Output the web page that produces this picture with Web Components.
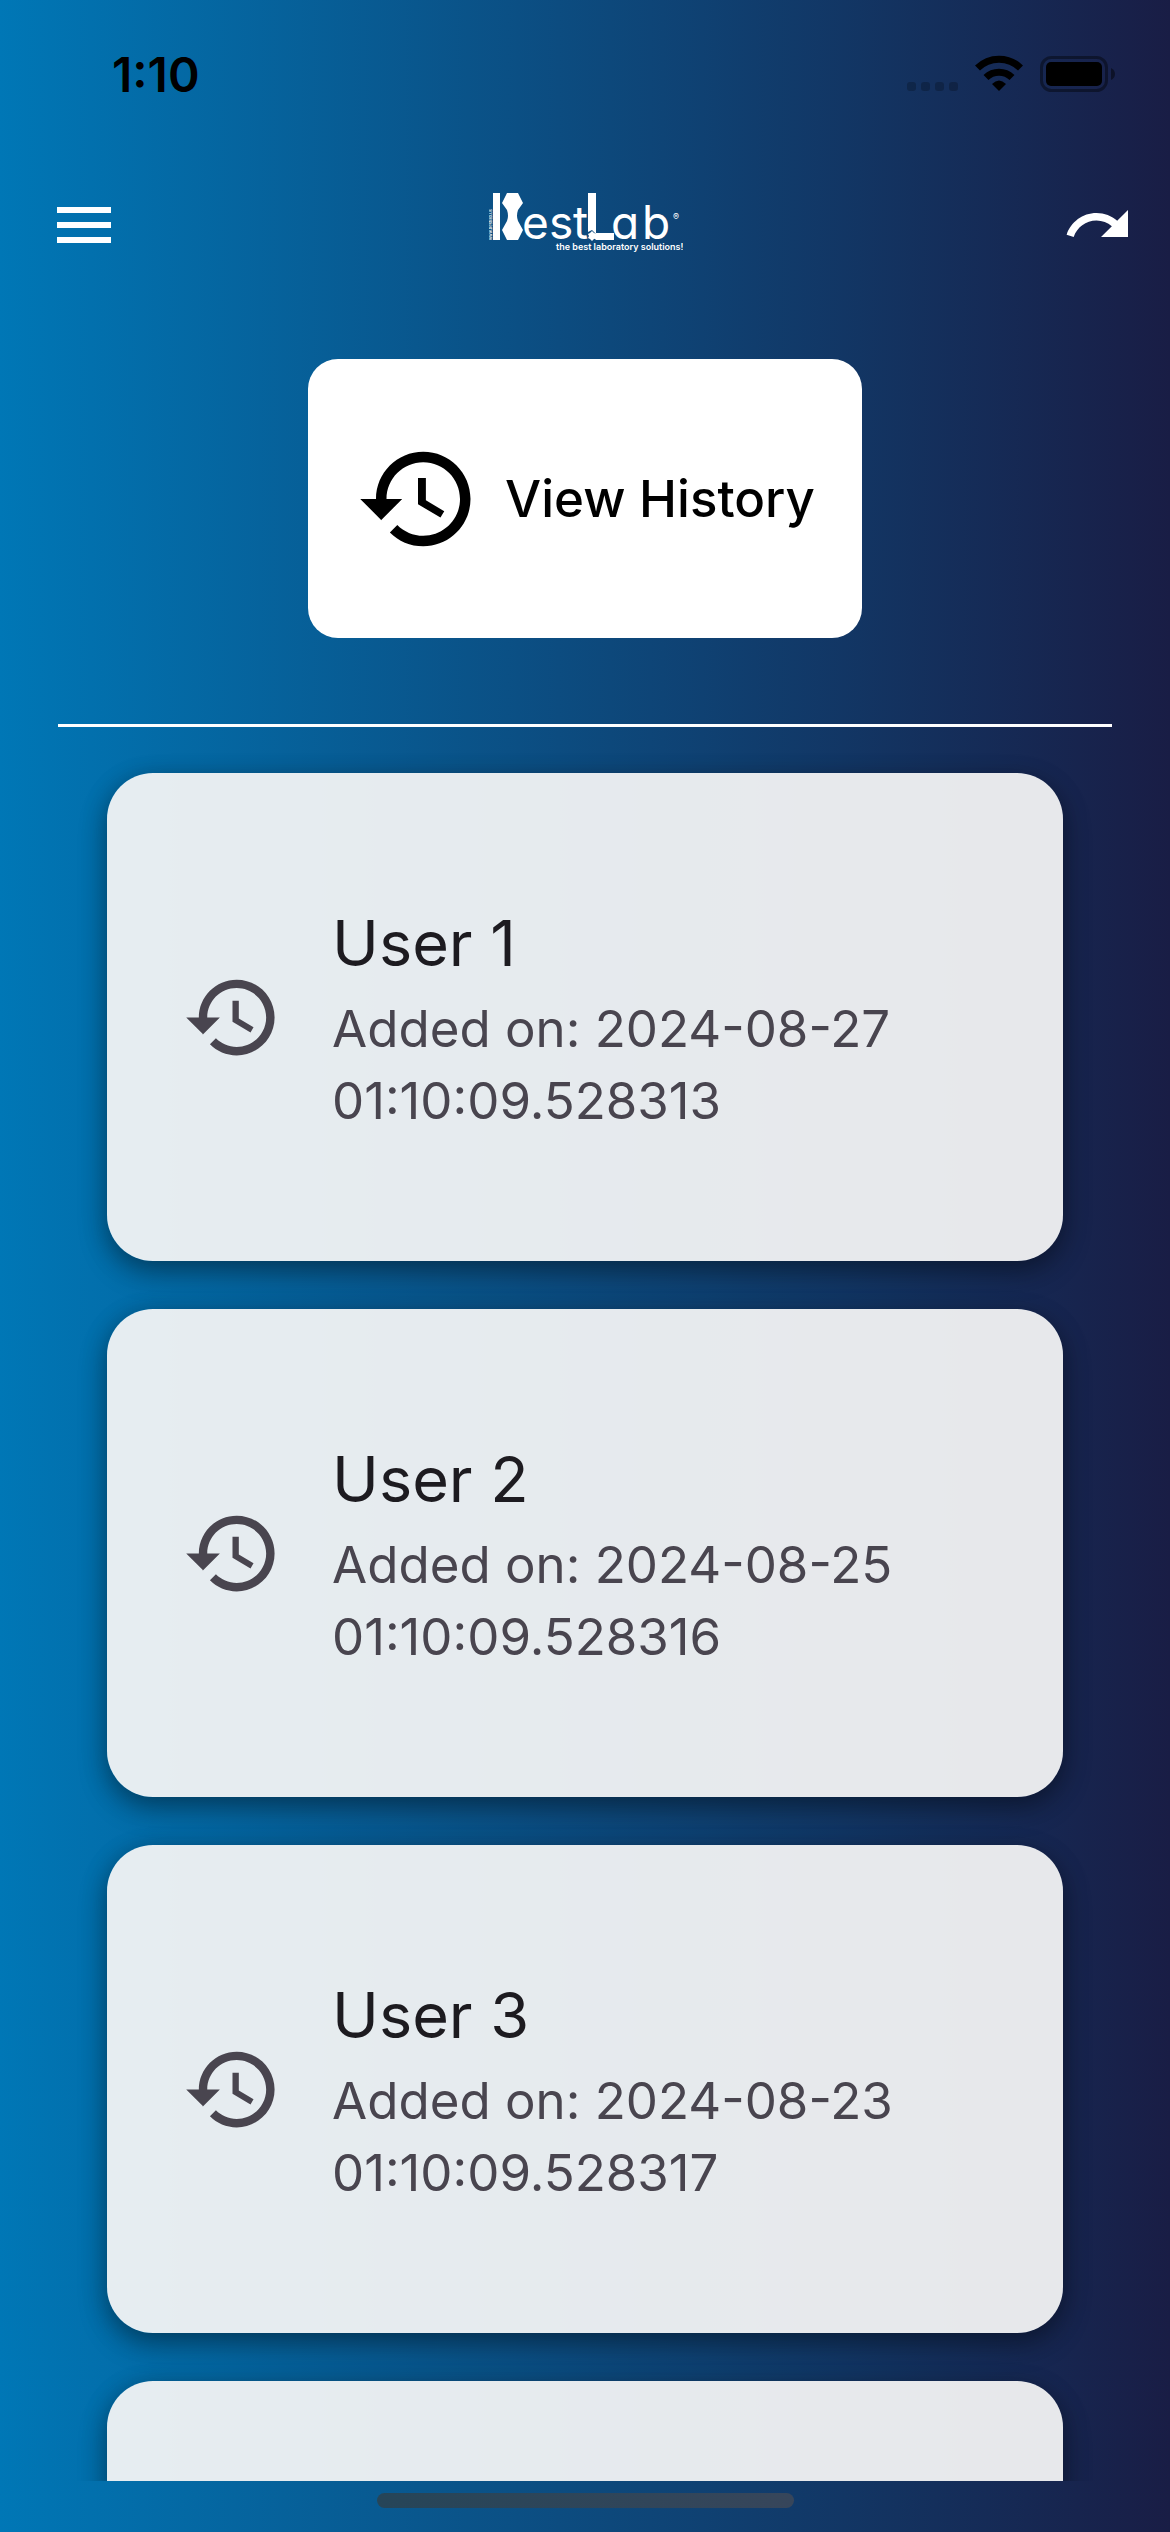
<!DOCTYPE html>
<html lang="en">
<head>
<meta charset="utf-8">
<meta name="viewport" content="width=device-width, initial-scale=1">
<title>BestLab – History</title>
<style>
  html, body { height: 100%; margin: 0; }
  body { font-family: Inter, "Noto Sans", sans-serif; }
</style>
</head>
<body>
<app-screen>
  <status-bar slot="status" time="1:10"></status-bar>
  <app-bar slot="bar"></app-bar>
  <history-button slot="action">View History</history-button>
  <history-card><span slot="name">User 1</span><span slot="date">Added on: 2024-08-27 01:10:09.528313</span></history-card>
  <history-card><span slot="name">User 2</span><span slot="date">Added on: 2024-08-25 01:10:09.528316</span></history-card>
  <history-card><span slot="name">User 3</span><span slot="date">Added on: 2024-08-23 01:10:09.528317</span></history-card>
  <history-card></history-card>
</app-screen>

<script>
const define = (name, html, setup) => {
  const template = document.createElement('template');
  template.innerHTML = html;
  customElements.define(name, class extends HTMLElement {
    constructor() {
      super();
      this.attachShadow({ mode: 'open' }).append(template.content.cloneNode(true));
    }
    connectedCallback() { if (setup) setup(this, this.shadowRoot); }
  });
};

define('history-icon', `
  <style>
    :host { display: block; flex: none; }
    svg { display: block; width: 100%; height: 100%; fill: currentColor; }
  </style>
  <svg viewBox="0 0 24 24" aria-hidden="true"><path d="M13 3c-4.97 0-9 4.03-9 9H1l3.89 3.89.07.14L9 12H6c0-3.87 3.13-7 7-7s7 3.13 7 7-3.13 7-7 7c-1.93 0-3.68-.79-4.94-2.06l-1.42 1.42C8.27 19.99 10.51 21 13 21c4.97 0 9-4.03 9-9s-4.03-9-9-9zm-1 5v5l4.28 2.54.72-1.21-3.5-2.08V8H12z"/></svg>`);

define('brand-logo', `
  <style>
    :host { display: block; width: 194px; height: 60px; }
    svg { display: block; width: 100%; height: 100%; fill: #fff; font-family: Inter, sans-serif; }
    .word { font-size: 46px; font-weight: 400; font-feature-settings: "cv11"; }
    .tag { font-size: 9px; font-weight: 600; }
    .mark { font-size: 9px; }
    .site { font-size: 4px; font-weight: 500; }
  </style>
  <svg viewBox="0 0 194 60" role="img" aria-label="BestLab, the best laboratory solutions!">
    <rect x="4" y="1" width="7" height="47"/>
    <path d="M18 1H29L34 11L29 18Q27 24 29 29L34 38L29 48H18L13 38L18 29Q20 24 18 18L13 11Z"/>
    <path d="M99 1H107V41H125V48H107L105 46L107 42L103 38L99 40Z"/>
    <path d="M103 39L105 41L108 42L107 44L108 46L105 47L103 49L101 47L99 46L100 44L99 42L101 41Z"/>
    <text class="word" x="33 60 84" y="47">est</text>
    <text class="word" x="122 153" y="47">ab</text>
    <text class="mark" x="184" y="28">®</text>
    <text class="tag" x="67" y="58">the best laboratory solutions!</text>
    <text class="site" transform="translate(3 48) rotate(-90)">www.bestlab.us</text>
  </svg>`);

define('status-bar', `
  <style>
    :host { display: flex; align-items: center; justify-content: space-between; height: 141px; padding: 0 54px 0 112px; box-sizing: border-box; color: #000; }
    time { font-size: 48px; line-height: 56px; font-weight: 600; padding-top: 8px; }
    .icons { display: flex; align-items: center; padding-top: 6px; }
    svg { display: block; }
  </style>
  <time></time>
  <div class="icons">
    <svg width="210" height="40" viewBox="0 0 210 40" role="img" aria-label="Wi-Fi connected, battery full">
      <g opacity=".22"><rect x="1" y="28" width="9" height="9" rx="3"/><rect x="15" y="28" width="9" height="9" rx="3"/><rect x="29" y="28" width="9" height="9" rx="3"/><rect x="43" y="28" width="9" height="9" rx="3"/></g>
      <path d="M93 37L86 30Q93 23 100 30Z"/>
      <path d="M80 23.500A18.500 18.500 0 0 1 106 23.500" fill="none" stroke="#000" stroke-width="7"/>
      <path d="M71.500 14A30.500 30.500 0 0 1 114.500 14" fill="none" stroke="#000" stroke-width="7"/>
      <rect x="135.500" y="3.500" width="65" height="33" rx="10" fill="none" stroke="#000" stroke-width="3" stroke-opacity=".4"/>
      <rect x="140" y="8" width="56" height="24" rx="5"/>
      <path d="M205 14Q209 16 209 20T205 26Z" opacity=".45"/>
    </svg>
  </div>`, (el, root) => { root.querySelector('time').textContent = el.getAttribute('time'); });

define('app-bar', `
  <style>
    :host { display: grid; grid-template-columns: 1fr auto 1fr; align-items: center; height: 168px; padding: 0 36px 0 48px; }
    button { width: 72px; height: 72px; padding: 0; border: 0; background: none; color: #fff; cursor: pointer; }
    button:last-child { justify-self: end; }
    button svg { display: block; width: 72px; height: 72px; fill: currentColor; }
    brand-logo { margin: 0 10px 6px 0; }
  </style>
  <button type="button" aria-label="Open menu"><svg viewBox="0 0 24 24"><path d="M3 18h18v-2H3v2zm0-5h18v-2H3v2zm0-7v2h18V6H3z"/></svg></button>
  <brand-logo></brand-logo>
  <button type="button" aria-label="Redo"><svg viewBox="0 0 24 24"><path d="M18.4 10.6C16.55 8.99 14.15 8 11.5 8c-4.65 0-8.58 3.03-9.96 7.22L3.9 16c1.05-3.19 4.05-5.5 7.6-5.5 1.95 0 3.73.72 5.12 1.88L13 16h9V7l-3.6 3.6z"/></svg></button>`);

define('history-button', `
  <style>
    :host { display: block; }
    button { display: flex; align-items: center; gap: 24px; height: 279px; padding: 0 47px; border: 0; border-radius: 30px; background: #fff; color: #000; font: 500 51px/60px Inter, sans-serif; white-space: nowrap; cursor: pointer; }
    history-icon { width: 126px; height: 126px; }
  </style>
  <button type="button"><history-icon></history-icon><span><slot></slot></span></button>`);

define('history-card', `
  <style>
    :host { display: flex; align-items: center; gap: 49px; flex: none; height: 488px; padding: 0 75px; box-sizing: border-box; border-radius: 46px; color: #49454f;
      background: linear-gradient(rgba(255,255,255,.9), rgba(255,255,255,.9)), rgba(0,0,0,.35);
      box-shadow: 0 6px 24px rgba(0,0,0,.28), 0 12px 30px rgba(0,0,0,.22); }
    history-icon { width: 101px; height: 101px; }
    .text { flex: 1; padding-top: 6px; }
    h2 { margin: 0 0 10px; font-size: 63px; line-height: 80px; font-weight: 400; color: #1d1b20; }
    p { margin: 0; font-size: 51px; line-height: 72px; }
  </style>
  <history-icon></history-icon>
  <div class="text"><h2><slot name="name"></slot></h2><p><slot name="date"></slot></p></div>`);

define('app-screen', `
  <style>
    :host { display: flex; flex-direction: column; height: 100vh; background: linear-gradient(90deg, #0077b6, #191d45); }
    .action { display: flex; justify-content: center; padding: 50px 0 86px; }
    hr { flex: none; width: auto; height: 3px; margin: 0 58px; border: 0; background: #fff; }
    main { flex: 1; min-height: 0; display: flex; flex-direction: column; gap: 48px; padding: 46px 107px 0; overflow: hidden; }
    footer { flex: none; display: flex; justify-content: center; padding: 12px 0 24px; }
    .home { width: 417px; height: 15px; border-radius: 8px; background: linear-gradient(90deg, #264558, #37465b); }
  </style>
  <slot name="status"></slot>
  <slot name="bar"></slot>
  <div class="action"><slot name="action"></slot></div>
  <hr>
  <main><slot></slot></main>
  <footer><div class="home"></div></footer>`);
</script>
</body>
</html>
